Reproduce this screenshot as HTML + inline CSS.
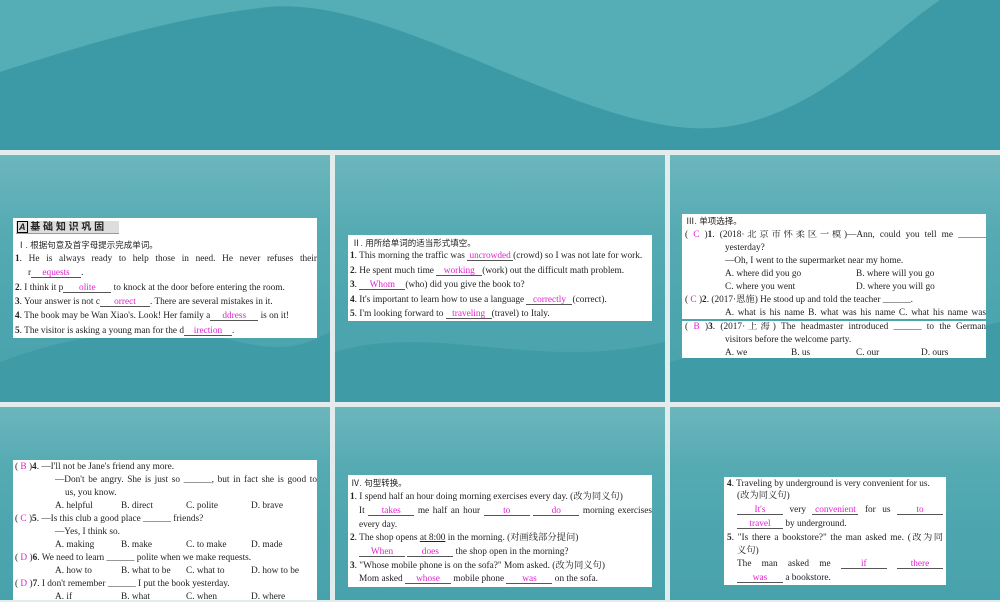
<!DOCTYPE html>
<html><head><meta charset="utf-8"><style>
*{margin:0;padding:0;box-sizing:border-box}
body{width:1000px;height:600px;background:#e3ecec;position:relative;overflow:hidden;font-family:"Liberation Serif","Noto Serif CJK SC",serif;color:#222}
.top{position:absolute;left:0;top:0;width:1000px;height:150px;background:#55aeb6}
.top svg{position:absolute;left:0;top:0}
.p{position:absolute;overflow:hidden;background:linear-gradient(180deg,#6cb6bd 0%,#56abb3 30%,#4da6af 60%,#48a2ac 100%)}
.p svg{position:absolute;left:0;bottom:0}
.box{position:absolute;background:#fff}
.l{position:absolute;white-space:nowrap;font-size:9.3px;line-height:10px}
.j{text-align:justify;text-align-last:justify;white-space:normal;overflow:hidden;height:11px}
.b{display:inline-block;border-bottom:0.8px solid #555;color:#e020d0;text-align:center;line-height:8px;height:9px;text-align-last:center}
.k{color:#e020d0}
.c{font-family:"Liberation Sans","Noto Sans CJK SC",sans-serif;font-size:8.5px}
b{font-weight:bold}
</style></head><body>
<div class="top"><svg width="1000" height="150" viewBox="0 0 1000 150"><path d="M0,72 C70,50 160,20 260,8 C380,-10 560,120 690,128 C800,135 880,40 940,0 L1000,0 L1000,150 L0,150 Z" fill="#3b9aa6"/></svg></div>

<div class="p" style="left:0;top:155px;width:330px;height:247px"><svg width="330" height="100"><path d="M0 60C80 30 160 20 240 40C290 52 310 40 330 30V100H0Z" fill="#3f9ca7"/></svg></div>
<div class="p" style="left:335px;top:155px;width:330px;height:247px"><svg width="330" height="100"><path d="M0 50C100 20 200 70 330 40V100H0Z" fill="#3f9ca7"/></svg></div>
<div class="p" style="left:670px;top:155px;width:330px;height:247px"><svg width="330" height="100"><path d="M0 60C100 30 200 50 330 20V100H0Z" fill="#3f9ca7"/></svg></div>
<div class="p" style="left:0;top:407px;width:330px;height:193px"></div>
<div class="p" style="left:335px;top:407px;width:330px;height:193px"></div>
<div class="p" style="left:670px;top:407px;width:330px;height:193px"></div>

<!-- panel 1 -->
<div class="box" style="left:13px;top:218px;width:304px;height:120px"></div>
<div style="position:absolute;left:16px;top:221px;width:103px;height:13px;background:#ddd;border-bottom:1px solid #999"></div>
<div class="l c" style="left:17px;top:222px;font-size:10px;font-weight:bold"><span style="border:1px solid #000;padding:0 1px;font-style:italic;font-size:9px">A</span> 基 础 知 识 巩 固</div>
<div class="l c" style="left:17px;top:240px">Ⅰ. 根据句意及首字母提示完成单词。</div>
<div class="l j" style="left:15px;top:254px;width:302px"><b>1</b>. He is always ready to help those in need. He never refuses their</div>
<div class="l" style="left:28px;top:268px">r<span class="b" style="width:50px;text-align:left">equests</span>.</div>
<div class="l" style="left:15px;top:283px"><b>2</b>. I think it p<span class="b" style="width:48px;text-align:left">olite</span> to knock at the door before entering the room.</div>
<div class="l" style="left:15px;top:297px"><b>3</b>. Your answer is not c<span class="b" style="width:50px;text-align:left">orrect</span>. There are several mistakes in it.</div>
<div class="l" style="left:15px;top:311px"><b>4</b>. The book may be Wan Xiao's. Look! Her family a<span class="b" style="width:48px;text-align:left">ddress</span> is on it!</div>
<div class="l" style="left:15px;top:326px"><b>5</b>. The visitor is asking a young man for the d<span class="b" style="width:48px;text-align:left">irection</span>.</div>

<!-- panel 2 -->
<div class="box" style="left:348px;top:235px;width:304px;height:86px"></div>
<div class="l c" style="left:352px;top:238px">Ⅱ. 用所给单词的适当形式填空。</div>
<div class="l" style="left:350px;top:251px"><b>1</b>. This morning the traffic was <span class="b" style="width:46px">uncrowded</span>(crowd) so I was not late for work.</div>
<div class="l" style="left:350px;top:266px"><b>2</b>. He spent much time <span class="b" style="width:46px">working</span>(work) out the difficult math problem.</div>
<div class="l" style="left:350px;top:280px"><b>3</b>. <span class="b" style="width:46px">Whom</span>(who) did you give the book to?</div>
<div class="l" style="left:350px;top:295px"><b>4</b>. It's important to learn how to use a language <span class="b" style="width:46px">correctly</span>(correct).</div>
<div class="l" style="left:350px;top:309px"><b>5</b>. I'm looking forward to <span class="b" style="width:46px">traveling</span>(travel) to Italy.</div>

<!-- panel 3 -->
<div class="box" style="left:682px;top:214px;width:304px;height:105px"></div>
<div class="box" style="left:682px;top:321px;width:304px;height:37px"></div>
<div class="l c" style="left:686px;top:216px">Ⅲ. 单项选择。</div>
<div class="l j" style="left:685px;top:230px;width:301px">( <span class="k">C</span> )<b>1</b>. (2018·北京市怀柔区一模)—Ann, could you tell me ______</div>
<div class="l" style="left:725px;top:243px">yesterday?</div>
<div class="l" style="left:725px;top:256px">—Oh, I went to the supermarket near my home.</div>
<div class="l" style="left:725px;top:269px">A. where did you go</div><div class="l" style="left:856px;top:269px">B. where will you go</div>
<div class="l" style="left:725px;top:282px">C. where you went</div><div class="l" style="left:856px;top:282px">D. where you will go</div>
<div class="l" style="left:685px;top:295px">( <span class="k">C</span> )<b>2</b>. (2017·恩施) He stood up and told the teacher ______.</div>
<div class="l j" style="left:725px;top:308px;width:261px">A. what is his name B. what was his name C. what his name was</div>
<div class="l j" style="left:685px;top:322px;width:301px">( <span class="k">B</span> )<b>3</b>. (2017·上海) The headmaster introduced ______ to the German</div>
<div class="l" style="left:725px;top:335px">visitors before the welcome party.</div>
<div class="l" style="left:725px;top:348px">A. we</div><div class="l" style="left:791px;top:348px">B. us</div><div class="l" style="left:856px;top:348px">C. our</div><div class="l" style="left:921px;top:348px">D. ours</div>

<!-- panel 4 -->
<div class="box" style="left:13px;top:460px;width:304px;height:140px"></div>
<div class="l" style="left:15px;top:462px">( <span class="k">B</span> )<b>4</b>. —I'll not be Jane's friend any more.</div>
<div class="l j" style="left:55px;top:475px;width:262px">—Don't be angry. She is just so ______, but in fact she is good to</div>
<div class="l" style="left:65px;top:488px">us, you know.</div>
<div class="l" style="left:55px;top:501px">A. helpful</div><div class="l" style="left:121px;top:501px">B. direct</div><div class="l" style="left:186px;top:501px">C. polite</div><div class="l" style="left:251px;top:501px">D. brave</div>
<div class="l" style="left:15px;top:514px">( <span class="k">C</span> )<b>5</b>. —Is this club a good place ______ friends?</div>
<div class="l" style="left:55px;top:527px">—Yes, I think so.</div>
<div class="l" style="left:55px;top:540px">A. making</div><div class="l" style="left:121px;top:540px">B. make</div><div class="l" style="left:186px;top:540px">C. to make</div><div class="l" style="left:251px;top:540px">D. made</div>
<div class="l" style="left:15px;top:553px">( <span class="k">D</span> )<b>6</b>. We need to learn ______ polite when we make requests.</div>
<div class="l" style="left:55px;top:566px">A. how to</div><div class="l" style="left:121px;top:566px">B. what to be</div><div class="l" style="left:186px;top:566px">C. what to</div><div class="l" style="left:251px;top:566px">D. how to be</div>
<div class="l" style="left:15px;top:579px">( <span class="k">D</span> )<b>7</b>. I don't remember ______ I put the book yesterday.</div>
<div class="l" style="left:55px;top:592px">A. if</div><div class="l" style="left:121px;top:592px">B. what</div><div class="l" style="left:186px;top:592px">C. when</div><div class="l" style="left:251px;top:592px">D. where</div>

<!-- panel 5 -->
<div class="box" style="left:348px;top:475px;width:304px;height:112px"></div>
<div class="l c" style="left:351px;top:478px">Ⅳ. 句型转换。</div>
<div class="l" style="left:350px;top:492px"><b>1</b>. I spend half an hour doing morning exercises every day. (改为同义句)</div>
<div class="l j" style="left:359px;top:506px;width:293px">It <span class="b" style="width:46px">takes</span> me half an hour <span class="b" style="width:46px">to</span> <span class="b" style="width:46px">do</span> morning exercises</div>
<div class="l" style="left:359px;top:520px">every day.</div>
<div class="l" style="left:350px;top:533px"><b>2</b>. The shop opens <u>at 8:00</u> in the morning. (对画线部分提问)</div>
<div class="l" style="left:359px;top:547px"><span class="b" style="width:46px">When</span> <span class="b" style="width:46px">does</span> the shop open in the morning?</div>
<div class="l" style="left:350px;top:561px"><b>3</b>. "Whose mobile phone is on the sofa?" Mom asked. (改为同义句)</div>
<div class="l" style="left:359px;top:574px">Mom asked <span class="b" style="width:46px">whose</span> mobile phone <span class="b" style="width:46px">was</span> on the sofa.</div>

<!-- panel 6 -->
<div class="box" style="left:724px;top:477px;width:222px;height:108px"></div>
<div class="l" style="left:727px;top:479px"><b>4</b>. Traveling by underground is very convenient for us.</div>
<div class="l" style="left:737px;top:491px">(改为同义句)</div>
<div class="l j" style="left:737px;top:505px;width:206px"><span class="b" style="width:46px">It's</span> very <span class="b" style="width:46px">convenient</span> for us <span class="b" style="width:46px">to</span></div>
<div class="l" style="left:737px;top:519px"><span class="b" style="width:46px">travel</span> by underground.</div>
<div class="l j" style="left:727px;top:533px;width:216px"><b>5</b>. "Is there a bookstore?" the man asked me. (改为同</div>
<div class="l" style="left:737px;top:546px">义句)</div>
<div class="l j" style="left:737px;top:559px;width:206px">The man asked me <span class="b" style="width:46px">if</span> <span class="b" style="width:46px">there</span></div>
<div class="l" style="left:737px;top:573px"><span class="b" style="width:46px">was</span> a bookstore.</div>
</body></html>
